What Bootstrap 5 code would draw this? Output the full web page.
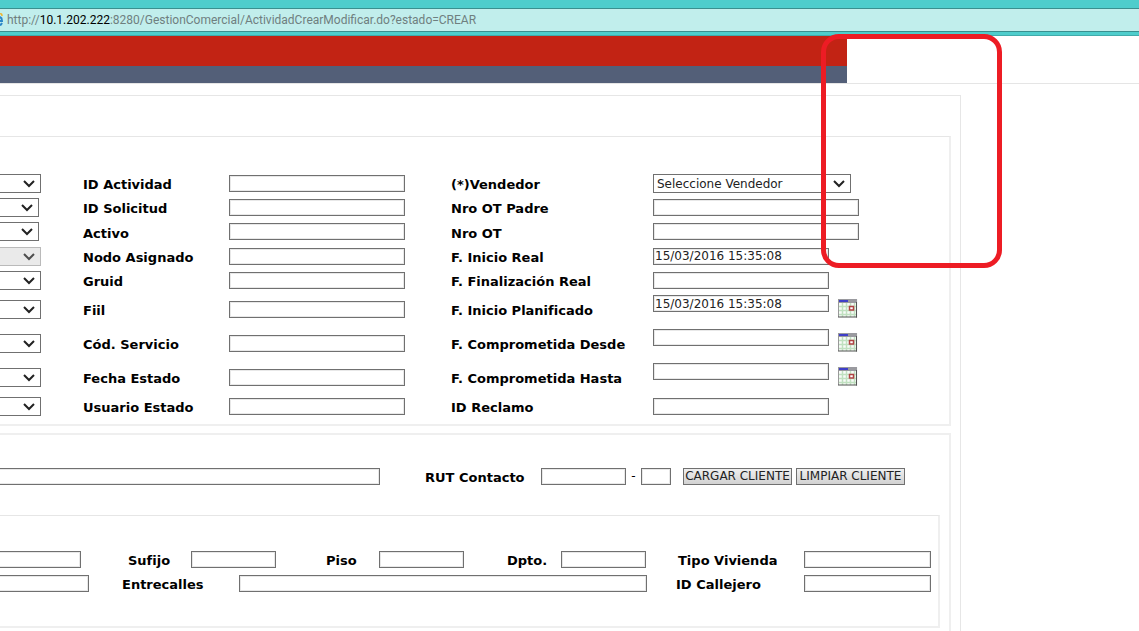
<!DOCTYPE html>
<html lang="es">
<head>
<meta charset="utf-8">
<meta name="viewport" content="width=device-width, initial-scale=1">
<title>Gestión Comercial - Actividad</title>
<link href="https://cdn.jsdelivr.net/npm/bootstrap@5.3.0/dist/css/bootstrap.min.css" rel="stylesheet">
<style>
body{font-family:"DejaVu Sans",Verdana,sans-serif;font-size:12px;line-height:16px;color:#000;background:#fff}
.browser-bar{background:#4ecdcc;padding:8px 0 3px;border-bottom:1px solid #41abab}
.address{background:#c1eeec;border-top:1px solid #3a8f8f;border-bottom:1px solid #3a8f8f;height:24px}
.address svg{flex:none}
.url-box{font-family:Roboto,"Noto Sans",sans-serif;font-size:12px;color:#6f7f7f;line-height:22px;padding-left:4px}
.url-box b{font-weight:400;color:#000}
.site-head{border-bottom:1px solid #e5e5e5}
.band{width:calc(100% - 292px)}
.band-red{background:#c22314;height:30px}
.band-slate{background:#535f78;height:17px}
.sheet{width:calc(100% - 178px);margin-top:11px;border-top:1px solid #e6e6e6;border-right:1px solid #e6e6e6;padding:40px 9px 0 0}
.panel{border:2px solid #efefef;border-left:0}
.thin-top{border-top:1px solid #e6e6e6}
.panel-activity{padding:34px 0 6px;margin-bottom:7px}
.panel-client{padding:29px 9px 3px 0;border-bottom:0}
.panel-address{margin-top:27px;padding:31px 0 31px}
.fields{display:grid;align-items:center}
.grid-activity{grid-template-columns:83fr 146fr 222fr 202fr 296fr;grid-template-rows:24px 24px 25px 24px 24px 34px 34px 34px 24px}
.grid-contact{grid-template-columns:425fr 116fr 142fr 257fr;height:24px}
.grid-street{grid-template-columns:128fr 63fr 135fr 53fr 128fr 54fr 117fr 126fr 134fr;height:24px}
.grid-cross{grid-template-columns:122fr 117fr 437fr 128fr 134fr;height:24px}
.fields>*{min-width:0}
label{font-weight:700;font-size:13px;line-height:20px;white-space:nowrap;padding-top:4px}
.box,.pick{display:block;border:1px solid #707070;border-radius:0;background:#fff;color:#222;outline:0;font-size:12px}
.box{height:17px;padding:0 1px;line-height:15px;box-shadow:inset 0 0 0 1px #e8e8e8}
.pick{height:19px;padding:1px 24px 0 3px;line-height:17px;appearance:none;background:#fff url("data:image/svg+xml,%3Csvg xmlns='http://www.w3.org/2000/svg' width='12' height='8'%3E%3Cpath d='M1 1l5 5 5-5' fill='none' stroke='%23222' stroke-width='2'/%3E%3C/svg%3E") no-repeat right 5px top 5px}
.pick:disabled{background-color:#e5e5e5;border-color:#aaa;opacity:.8}
.cut{border-left:0}
.box.cut{box-shadow:inset -1px 0 #e8e8e8,inset 0 1px #e8e8e8,inset 0 -1px #e8e8e8}
.w-pick{width:41px}.w-short{width:39px}
.w-std{width:176px}.w-long{width:206px}.w-seller{width:198px}
.w-small{width:85px}.w-digit{width:30px}
.w-contact{width:380px}.w-cut1{width:81px}.w-cut2{width:89px}.w-cross{width:408px}.w-kind{width:127px}
.rut-dash{width:15px;text-align:center}
.date-cell{height:34px;padding:3px 0 4px;gap:9px}
.cal{border:0;background:none;padding:0;width:20px;height:20px;align-self:center;line-height:0}
.act{border:1px solid #707070;border-radius:0;background:linear-gradient(#efefef,#d2d2d2);color:#222;height:17px;width:109px;padding:0;line-height:15px;font-size:12px;white-space:nowrap}
.highlight{left:821px;top:34px;width:181px;height:234px;border:5px solid #ed1c24;border-radius:18px;pointer-events:none}
</style>
</head>
<body>
<header>
<div class="browser-bar">
<div class="address d-flex align-items-center">
<svg width="3" height="18" viewBox="0 0 3 18"><path d="M0 3q2-1 2 2" fill="none" stroke="#f0b429" stroke-width="1.500"/><path d="M0 6q2 1 2 4H0M0 14q1 0 2-2" fill="none" stroke="#2a86c8" stroke-width="2"/></svg>
<div class="url-box">http://<b>10.1.202.222</b>:8280/GestionComercial/ActividadCrearModificar.do?estado=CREAR</div>
</div>
</div>
<div class="site-head"><div class="band band-red"></div><div class="band band-slate"></div></div>
</header>

<svg class="d-none"><symbol id="calendar" viewBox="0 0 20 19"><path fill="#f8fbf8" d="M0 0h20v19H0z"/><path d="M4.500 4v14M8.500 4v14M12.500 4v14M16.500 4v14M1 7.500h17M1 11.500h17M1 15.500h17" stroke="#c0e0c0" stroke-width="1.500"/><path fill="#9a9a9f" d="M0 0h19v4H0z"/><path fill="#3f3fc8" d="M1 1h9v2H1z"/><path d="M.5 0v18" stroke="#999"/><path d="M18.500 3v15.500M0 18h19" stroke="#555"/><path d="M11.500 7.500h4v3.500h-4z" fill="#fff" stroke="#b04444" stroke-width="1.500"/></symbol></svg>

<main class="sheet">
<section class="panel thin-top panel-activity">
<form class="fields grid-activity">
<select class="pick cut w-pick" aria-label="Opción 1"><option></option></select>
<label for="act">ID Actividad</label><input class="box w-std" id="act">
<label for="ven">(*)Vendedor</label><select class="pick w-seller" id="ven"><option>Seleccione Vendedor</option></select>

<select class="pick cut w-short" aria-label="Opción 2"><option></option></select>
<label for="sol">ID Solicitud</label><input class="box w-std" id="sol">
<label for="otp">Nro OT Padre</label><input class="box w-long" id="otp">

<select class="pick cut w-short" aria-label="Opción 3"><option></option></select>
<label for="activo">Activo</label><input class="box w-std" id="activo">
<label for="ot">Nro OT</label><input class="box w-long" id="ot">

<select class="pick cut w-pick" aria-label="Opción 4" disabled><option></option></select>
<label for="nodo">Nodo Asignado</label><input class="box w-std" id="nodo">
<label for="fir">F. Inicio Real</label><input class="box w-std" id="fir" value="15/03/2016 15:35:08">

<select class="pick cut w-pick" aria-label="Opción 5"><option></option></select>
<label for="gruid">Gruid</label><input class="box w-std" id="gruid">
<label for="ffr">F. Finalización Real</label><input class="box w-std" id="ffr">

<select class="pick cut w-pick" aria-label="Opción 6"><option></option></select>
<label for="fiil">Fiil</label><input class="box w-std" id="fiil">
<label for="fip">F. Inicio Planificado</label>
<div class="date-cell d-flex align-items-start"><input class="box w-std" id="fip" value="15/03/2016 15:35:08"><button type="button" class="cal" aria-label="Calendario"><svg width="20" height="19"><use href="#calendar"/></svg></button></div>

<select class="pick cut w-pick" aria-label="Opción 7"><option></option></select>
<label for="cod">Cód. Servicio</label><input class="box w-std" id="cod">
<label for="fcd">F. Comprometida Desde</label>
<div class="date-cell d-flex align-items-start"><input class="box w-std" id="fcd"><button type="button" class="cal" aria-label="Calendario"><svg width="20" height="19"><use href="#calendar"/></svg></button></div>

<select class="pick cut w-pick" aria-label="Opción 8"><option></option></select>
<label for="fes">Fecha Estado</label><input class="box w-std" id="fes">
<label for="fch">F. Comprometida Hasta</label>
<div class="date-cell d-flex align-items-start"><input class="box w-std" id="fch"><button type="button" class="cal" aria-label="Calendario"><svg width="20" height="19"><use href="#calendar"/></svg></button></div>

<select class="pick cut w-pick" aria-label="Opción 9"><option></option></select>
<label for="usu">Usuario Estado</label><input class="box w-std" id="usu">
<label for="rec">ID Reclamo</label><input class="box w-std" id="rec">
</form>
</section>

<section class="panel panel-client">
<form class="fields grid-contact">
<input class="box cut w-contact" aria-label="Contacto">
<label for="rut">RUT Contacto</label>
<div class="d-flex align-items-center"><input class="box w-small" id="rut"><span class="rut-dash">-</span><input class="box w-digit" aria-label="Dígito verificador"></div>
<div class="d-flex align-items-center gap-1"><button type="button" class="act">CARGAR CLIENTE</button><button type="button" class="act">LIMPIAR CLIENTE</button></div>
</form>
<div class="panel thin-top panel-address">
<form>
<div class="fields grid-street">
<input class="box cut w-cut1" aria-label="Número">
<label for="suf">Sufijo</label><input class="box w-small" id="suf">
<label for="piso">Piso</label><input class="box w-small" id="piso">
<label for="dpto">Dpto.</label><input class="box w-small" id="dpto">
<label for="viv">Tipo Vivienda</label><input class="box w-kind" id="viv">
</div>
<div class="fields grid-cross">
<input class="box cut w-cut2" aria-label="Calle">
<label for="ent">Entrecalles</label><input class="box w-cross" id="ent">
<label for="cal">ID Callejero</label><input class="box w-kind" id="cal">
</div>
</form>
</div>
</section>
</main>
<div class="highlight position-absolute"></div>
<script src="https://cdn.jsdelivr.net/npm/bootstrap@5.3.0/dist/js/bootstrap.bundle.min.js"></script>
</body>
</html>
